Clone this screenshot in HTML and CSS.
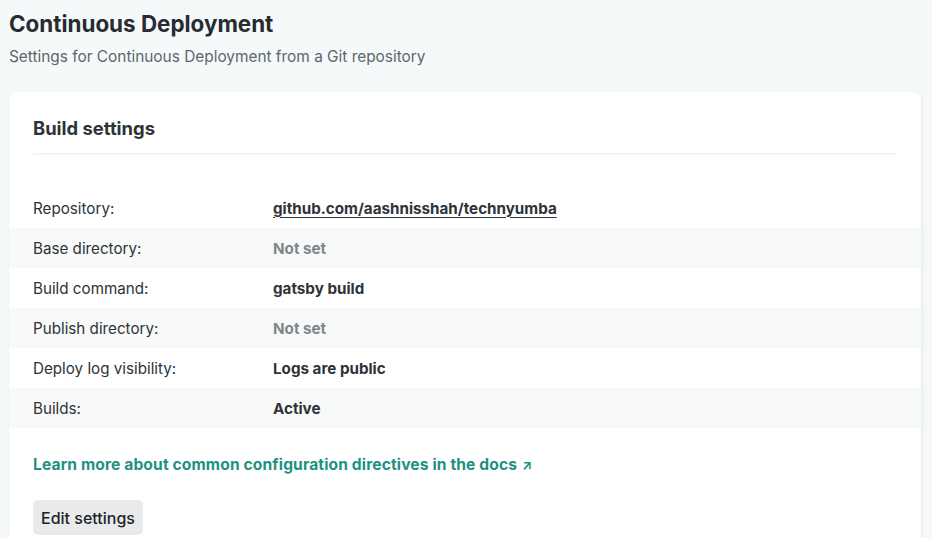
FILE: index.html
```html
<!DOCTYPE html>
<html>
<head>
<meta charset="utf-8">
<link rel="stylesheet" href="styles.css">
</head>
<body>
<div class="page">
  <header class="page-head">
    <h1 class="title">Continuous Deployment</h1>
    <p class="subtitle">Settings for Continuous Deployment from a Git repository</p>
  </header>
  <section class="card">
    <h2 class="card-title">Build settings</h2>
    <div class="rows">
      <div class="row"><span class="label">Repository:</span><a class="value link-value">github.com/aashnisshah/technyumba</a></div>
      <div class="row alt"><span class="label">Base directory:</span><span class="value muted">Not set</span></div>
      <div class="row"><span class="label">Build command:</span><span class="value">gatsby build</span></div>
      <div class="row alt"><span class="label">Publish directory:</span><span class="value muted">Not set</span></div>
      <div class="row"><span class="label">Deploy log visibility:</span><span class="value">Logs are public</span></div>
      <div class="row alt"><span class="label">Builds:</span><span class="value">Active</span></div>
    </div>
    <a class="docs">Learn more about common configuration directives in the docs <span class="arrow">↗</span></a>
    <div class="actions"><button class="btn">Edit settings</button></div>
  </section>
</div>
</body>
</html>
```
FILE: styles.css
```css
* { box-sizing: border-box; }
html, body { margin: 0; padding: 0; }
body {
  background: #f6f9fa;
  font-family: Inter, "Noto Sans", sans-serif;
  color: #2e3338;
  width: 932px;
  height: 538px;
  overflow: hidden;
}
.page { padding: 10px 11px 0 9px; }
.title {
  margin: 0;
  font-size: 22.4px;
  font-weight: 700;
  line-height: 28px;
  color: #262c31;
}
.subtitle {
  margin: 8px 0 0;
  font-size: 15.4px;
  line-height: 22px;
  color: #5b666d;
}
.card {
  margin-top: 24px;
  background: #fff;
  border-radius: 8px 8px 0 0;
  box-shadow: 0 0 0 1px rgba(0,0,0,0.015), 2px 2px 4px rgba(0,0,0,0.04);
  padding: 24px 0 3px;
}
.card-title {
  margin: 0 24px;
  font-size: 18.4px;
  font-weight: 700;
  line-height: 24px;
  color: #2e3338;
  padding-bottom: 13px;
  border-bottom: 2px solid #f1f3f4;
}
.rows { margin-top: 33px; }
.row {
  display: flex;
  align-items: center;
  height: 40px;
  padding: 0 24px;
  font-size: 15.2px;
}
.row.alt { background: #f8f9f9; }
.label { width: 240px; color: #2e3338; }
.value { font-weight: 700; font-size: 15.2px; color: #2e3338; }
.link-value { text-decoration: underline; text-underline-offset: 3px; text-decoration-thickness: 1px; }
.muted { color: #7e878c; }
.docs {
  display: block;
  margin: 27px 24px 0;
  font-size: 15.6px;
  font-weight: 700;
  line-height: 20px;
  color: #21917f;
  letter-spacing: 0.12px;
}
.arrow { font-size: 13px; margin-left: 1px; }
.actions { padding: 25px 24px 0; }
.btn {
  font-family: Inter, "Noto Sans", sans-serif;
  font-size: 16px;
  font-weight: 500;
  color: #1f2428;
  background: #e9ebeb;
  border: 0;
  border-radius: 5px;
  padding: 0 8px;
  height: 35px;
  display: block;
}
```
